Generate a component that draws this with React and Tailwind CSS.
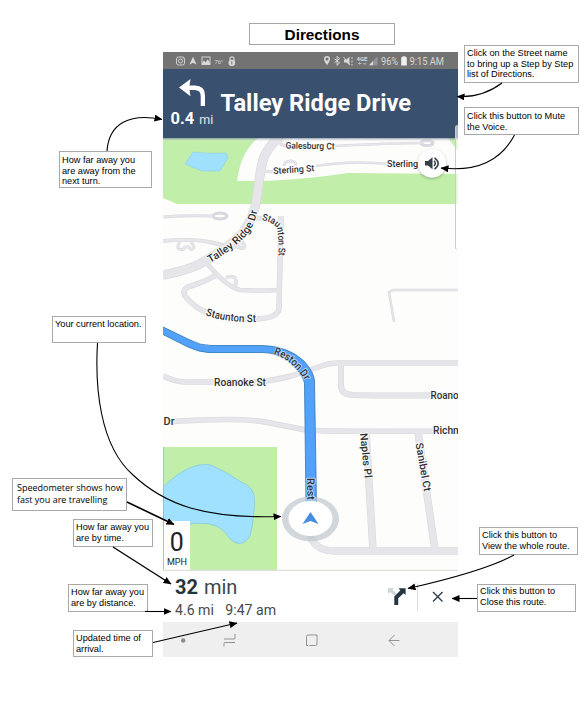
import React from "react";

function Note({ className, lines, font = "text-[9.2px]" }) {
  return (
    <div className={`border border-[#a9a9a9] bg-white text-black ${font} ${className}`}>
      {lines.map((line) => (
        <div key={line} className="whitespace-nowrap">{line}</div>
      ))}
    </div>
  );
}

function LeftNotes() {
  return (
    <div className="flex w-[163px] flex-col">
      <Note className="ml-[59px] mt-[151px] h-[37px] w-[93px] pl-[2px] pt-[3px] leading-[10.5px]" lines={["How far away you", "are away from the", "next turn."]} />
      <Note className="ml-[52px] mt-[128px] h-[27px] w-[94px] pl-[2px] pt-[2px] leading-[11px]" lines={["Your current location."]} />
      <Note className="ml-[12px] mt-[135px] h-[33px] w-[115px] pl-[4px] pt-[3px] font-['Open_Sans',sans-serif] leading-[12px]" font="text-[9px]" lines={["Speedometer shows how", "fast you are travelling"]} />
      <Note className="ml-[73px] mt-[8px] h-[28px] w-[80px] pl-[2px] pt-[2px] leading-[11px]" lines={["How far away you", "are by time."]} />
      <Note className="ml-[68px] mt-[37px] h-[28px] w-[80px] pl-[2px] pt-[2px] leading-[11px]" lines={["How far away you", "are by distance."]} />
      <Note className="ml-[73px] mt-[18px] h-[27px] w-[80px] pl-[2px] pt-[2px] leading-[10.5px]" lines={["Updated time of", "arrival."]} />
    </div>
  );
}

function RightNotes() {
  return (
    <div className="flex w-[129px] flex-col">
      <Note className="ml-[6px] mt-[45px] h-[38px] w-[115px] pl-[2px] pt-[2px] leading-[10.5px]" lines={["Click on the Street name", "to bring up a Step by Step", "list of Directions."]} />
      <Note className="ml-[6px] mt-[24px] h-[28px] w-[115px] pl-[2px] pt-[3px] leading-[10.5px]" lines={["Click this button to Mute", "the Voice."]} />
      <Note className="ml-[21px] mt-[392px] h-[28px] w-[99px] pl-[2px] pt-[2px] leading-[10.5px]" lines={["Click this button to", "View the whole route."]} />
      <Note className="ml-[19px] mt-[29px] h-[28px] w-[99px] pl-[2px] pt-[1px] leading-[11px]" lines={["Click this button to", "Close this route."]} />
    </div>
  );
}

function StatusBar() {
  return (
    <svg className="block h-[17px] w-[295px] bg-[#747373]" viewBox="163 52 295 17" fontFamily="Roboto, sans-serif" fill="#d8d8d8">
      <g fill="none" stroke="#d0d0d0">
        <rect x="176.5" y="57" width="8" height="8" rx="2" />
        <circle cx="180.5" cy="61" r="2" />
        <circle cx="183" cy="58.7" r=".2" />
        <rect x="202" y="57" width="8" height="7.5" />
        <path d="M230 61v-2.2a2 2 0 0 1 4 0V61" strokeWidth="1.3" />
      </g>
      <path d="M193 56.7l3.7 8-3.7-2-3.7 2z" />
      <path d="M202 63l2-2.5 1.7 1.7 2-3 2.3 3.5V65h-8z" />
      <text x="214.5" y="63.5" fontSize="6" textLength="8.5">76°</text>
      <rect x="228.5" y="59.8" width="6.6" height="6.2" rx="3" />
      <path d="M231.8 61.3v3" stroke="#747373" />
      <path d="M327 56.1a3 3 0 0 0-3 3c0 2.4 3 6.2 3 6.2s3-3.8 3-6.2a3 3 0 0 0-3-3z" />
      <circle cx="327" cy="59" r="1.5" fill="#747373" />
      <path d="M334.5 58.8l5 4-2.4 2.5v-9l2.4 2.5-5 4" fill="none" stroke="#d8d8d8" />
      <path d="M344 59.5h2.5l3-2.7v8.5l-3-2.8H344z" />
      <path d="M343.5 57l6.5 7.8M352 57v2m0 1.5v2m0 1.5v1.5" fill="none" stroke="#d8d8d8" />
      <text x="356.5" y="61.3" fontSize="6.2" fontWeight="700" textLength="11" lengthAdjust="spacingAndGlyphs">4GE</text>
      <path d="M358.5 63.5h3m-3 0l1.3-1m-1.3 1l1.3 1M363 63.8h3.5" stroke="#d8d8d8" strokeWidth=".7" fill="none" />
      <path d="M369 65.3l8.5-8.8v8.8z" fill="#969595" />
      <path d="M369 65.3l4-4.2v4.2z" />
      <text x="381" y="65" fontSize="10" textLength="17" lengthAdjust="spacingAndGlyphs">96%</text>
      <path d="M402.5 56.3h3v1h1.3v8.2h-5.6v-8.2h1.3z" fill="#f0f0f0" />
      <text x="409.5" y="65" fontSize="10" textLength="34.5" lengthAdjust="spacingAndGlyphs">9:15 AM</text>
    </svg>
  );
}

function Header() {
  return (
    <div className="flex h-[69px] bg-[#39516e] font-['Roboto',sans-serif] text-white">
      <div className="flex w-[57.5px] flex-col pl-[7.5px] pt-[9px]">
        <svg className="ml-[8px] block h-[30px] w-[28px]" viewBox="179 78 28 30">
          <path d="M179 87.5l11.5-8.5-1 6.5h5.5q10 0 10 10v10.5h-4.3V96q0-6-6-6h-5.2l1 6.2z" fill="#fff" />
        </svg>
        <div className="flex items-baseline gap-[5px] whitespace-nowrap leading-[22px]">
          <span className="text-[16.5px] font-bold">0.4</span>
          <span className="text-[12.5px] text-[#e1e6ec]">mi</span>
        </div>
      </div>
      <div className="flex items-center whitespace-nowrap pt-[1px] text-[23.7px] font-bold">Talley Ridge Drive</div>
    </div>
  );
}

const streets = [
  ["M281 136Q267 147 263 160Q260 172 257 196Q255 216 244 231Q235 243 208 259Q195 269 163 275", 9],
  ["M163 217Q185 215 212 216", 2.5],
  ["M163 241Q194 238 214 243L235 248", 3.5],
  ["M181 240q-5 7-2 9q4 2 6-2h4q2 4 5 1q0-3-5-9", 2.5],
  ["M235 246q3-5 7-4q5 5 0 6z", 3.5],
  ["M206 262Q225 286 240 290Q255 291 279 290", 4],
  ["M216 275Q207 281 188 287Q182 290 185 296Q196 309 206 312Q225 321 246 319Q277 320 279 309L281 216", 5],
  ["M226 278q5-3 9 0q3 6-2 9", 3],
  ["M250 219L258 218Q277 220 280 230", 4],
  ["M163 376Q178 383 190 382H245Q270 382 291 376L328 364Q334 363 341 363H460", 5],
  ["M341 363V386Q341 394 352 395Q390 396 460 395", 5.5],
  ["M163 422Q238 417 265 422L306 430Q320 432 460 431", 5],
  ["M366 431L373 550", 7],
  ["M418 432L435 550", 7],
  ["M310 535Q315 551 335 551H460", 7],
  ["M335 146Q390 143 424 143", 2],
  ["M316 166Q350 160 390 164", 2],
  ["M280 144L286 146M264 171L274 172", 2.5],
  ["M394 322L389 292L393 290H460", 2],
  ["M284 166q0-5 7-5q6 1 4 4", 2.5],
];

function Label({ x, y, w, size = 10, children, rotate = 0 }) {
  return (
    <text x={x} y={y} fontSize={size} textLength={w} lengthAdjust="spacingAndGlyphs" transform={`rotate(${rotate} ${x} ${y})`}>
      {children}
    </text>
  );
}

function StreetMap() {
  return (
    <svg className="block h-[433px] w-[295px]" viewBox="163 138 295 433">
      <defs>
        <path id="talley" d="M210 263Q238 247 250 231Q258 216 258 203" />
        <path id="staunton-short" d="M261.5 220Q272 222 276.5 227Q279 233 278.5 262" />
        <path id="staunton" d="M205.5 315Q225 323 262 322" />
        <path id="reston" d="M273.5 354Q291 359 304 379L309 388" />
        <linearGradient id="shade" x1="0" y1="0" x2="0" y2="1">
          <stop offset="0" stopColor="#68798b" stopOpacity=".7" />
          <stop offset="1" stopColor="#fff" stopOpacity="0" />
        </linearGradient>
        <filter id="soft" x="-30%" y="-30%" width="160%" height="160%">
          <feDropShadow dx="0" dy="1" stdDeviation="1.5" floodOpacity=".3" />
        </filter>
      </defs>
      <rect x="163" y="138" width="295" height="433" fill="#fdfdfc" />
      <path d="M163 138H258Q241 151 237 181H265Q309 179 348 173L458 174V204H177L163 198zM448 138H458V151z" fill="#c1eea8" />
      <path d="M193 152Q210 154 226 153L228 158L220 171H202L185 164z" fill="#9fe0fc" stroke="#91cfe8" strokeWidth=".6" />
      <rect x="163" y="447" width="114" height="124" fill="#c1eea8" />
      <path d="M163 487Q190 461 211 465Q229 473 241 482C256 488 255 498 254 511Q253 525 250 536C244 546 234 547 225 532Q212 519 184 525L163 532z" fill="#9fe1ff" stroke="#82c4dc" strokeWidth=".7" />
      <g fill="none" strokeLinejoin="round">
        {streets.map(([d, width]) => <path key={d} d={d} stroke="#d8d8de" strokeWidth={width + 0.5} />)}
        <g stroke="#d8d8de" strokeWidth="3">
          <ellipse cx="220" cy="216" rx="7" ry="3" />
          <ellipse cx="427" cy="143" rx="6" ry="2.5" />
        </g>
        {streets.map(([d, width]) => <path key={`${d}-fill`} d={d} stroke="#e6e5ea" strokeWidth={Math.max(0.5, width - 0.7)} />)}
      </g>
      <path
        d="M160 325.5L190 340Q200 345.5 211 345.5H262Q288 346 304 361Q314 372 314.5 381L316.5 505H306L304.5 383Q302 373 290 362Q278 352.5 262 352.5H208Q199 352 188 347L160 333z"
        fill="#52a1fa"
        stroke="#2f77b5"
        strokeWidth=".8"
      />
      <ellipse cx="310.5" cy="519" rx="28.5" ry="22.5" fill="#bfc8cf" fillOpacity=".72" />
      <ellipse cx="310.5" cy="518.5" rx="22" ry="17.5" fill="#fff" />
      <path d="M310.5 512L318.5 524L310.5 521L302.5 524z" fill="#478ddf" />
      <g fontFamily="Roboto, sans-serif" fontWeight="500" fill="#303030" stroke="#ffffff" strokeWidth="1.8" strokeLinejoin="round" paintOrder="stroke">
        <Label x={285.5} y={148.5} w={49} size={9} rotate={1}>Galesburg Ct</Label>
        <Label x={273.5} y={174} w={41} size={9} rotate={-4}>Sterling St</Label>
        <Label x={387} y={167} w={31} size={9}>Sterling</Label>
        <text fontSize="10.5"><textPath href="#talley" textLength="73" lengthAdjust="spacingAndGlyphs">Talley Ridge Dr</textPath></text>
        <text fontSize="9.5"><textPath href="#staunton-short" textLength="46" lengthAdjust="spacingAndGlyphs">Staunton St</textPath></text>
        <text fontSize="10.5"><textPath href="#staunton" textLength="51.5" lengthAdjust="spacingAndGlyphs">Staunton St</textPath></text>
        <g stroke="#b4d9ff"><text fontSize="10.5"><textPath href="#reston" textLength="42" lengthAdjust="spacingAndGlyphs">Reston Dr</textPath></text></g>
        <Label x={214} y={386} w={52} size={10.5}>Roanoke St</Label>
        <Label x={430.5} y={399} w={28} size={10}>Roano</Label>
        <Label x={163.5} y={425} w={11} size={10}>Dr</Label>
        <Label x={433} y={434} w={29} size={10.5}>Richm</Label>
        <Label x={360} y={433.5} w={45} size={10.5} rotate={84}>Naples Pl</Label>
        <Label x={415.5} y={443.5} w={49} size={10.5} rotate={80}>Sanibel Ct</Label>
        <g stroke="#b4d9ff"><Label x={307} y={478} w={22} size={10.5} rotate={89}>Rest</Label></g>
      </g>
      <circle cx="432" cy="163.5" r="14" fill="#fff" filter="url(#soft)" />
      <path d="M425 161h3l4.5-3.7v12l-4.5-3.8h-3z" fill="#333e46" />
      <path d="M434 160.8q2.6 2.6 0 5.2M434.5 157.9q7.4 5.6 0 11.2" fill="none" stroke="#333e46" strokeWidth="1.5" />
      <rect x="163" y="138" width="295" height="4" fill="url(#shade)" />
      <path d="M163.5 447V571" stroke="#8bc575" strokeWidth=".6" />
      <rect x="164" y="521" width="26" height="50" fill="#fff" />
      <g fontFamily="Roboto, sans-serif" fill="#202326" textAnchor="middle">
        <text x="176.7" y="550.5" fontSize="25" textLength="14" lengthAdjust="spacingAndGlyphs">0</text>
        <text x="177" y="564.8" fontSize="8.7" textLength="20" lengthAdjust="spacingAndGlyphs">MPH</text>
      </g>
      <path d="M163 570.5H458" stroke="#dededb" strokeWidth="1.5" />
    </svg>
  );
}

function TripBar() {
  return (
    <div className="flex h-[51px] bg-white font-['Roboto',sans-serif] text-[#46494d]">
      <div className="flex w-[220px] flex-col pl-[12px] pt-[4px]">
        <div className="flex items-baseline gap-[6px] text-[20px] leading-[24px]">
          <b className="text-[#27333b]">32</b><span className="text-[#3b454c]">min</span>
        </div>
        <div className="flex gap-[11.5px] whitespace-nowrap text-[14.1px] leading-[22px]"><span>4.6 mi</span><span>9:47 am</span></div>
      </div>
      <svg className="block h-[51px] w-[75px]" viewBox="383 571 75 51">
        <path d="M388 588h6l-1.5 2 4.5 4-2 2-5-4-2 2z" fill="#d2d5d7" />
        <path d="M394.3 605v-8.5l6-6-1.7-2.2h7v6.8l-2-1.8-5.4 5v6.7z" fill="#263641" />
        <path d="M417.5 583v28" stroke="#dddddd" />
        <path d="M433 592l9.5 9.5M442.5 592l-9.5 9.5" stroke="#303d46" strokeWidth="1.4" />
      </svg>
    </div>
  );
}

function NavigationBar() {
  return (
    <svg className="block h-[35px] w-[295px] bg-[#efefef]" viewBox="163 622 295 35" fill="none" stroke="#939393" strokeWidth="1">
      <circle cx="183.2" cy="640.5" r="2.2" fill="#8d8d8d" stroke="none" />
      <path d="M224 639h10q1 0 1-1v-4M224 646.5v-3q0-1 1-1h10" />
      <path d="M308 645.5h-1.5v-9q0-1.5 1.5-1.5h9v9q0 1.5-1.5 1.5h-6" />
      <path d="M399.5 640.5H389M394.5 635l-5.5 5.5 5.5 5.5" />
    </svg>
  );
}

function CalloutArrows() {
  return (
    <svg className="pointer-events-none absolute left-0 top-0 h-[721px] w-[587px]" viewBox="0 0 587 721">
      <defs>
        <marker id="arrow" markerUnits="userSpaceOnUse" markerWidth="8" markerHeight="7" refX="7.5" refY="3.5" orient="auto">
          <path d="M0 0L8 3.5L0 7z" fill="#000" />
        </marker>
      </defs>
      <g fill="none" stroke="#000" strokeWidth="1.1">
        <path d="M107 151C109 123 130 113 162 119.5" markerEnd="url(#arrow)" />
        <path d="M97.5 343C95 385 99 445 133 475C165 505 205 519 281 516.5" markerEnd="url(#arrow)" />
        <path d="M502 83Q482 98 457 96.5" markerEnd="url(#arrow)" />
        <path d="M514.5 135Q494 174 441 168" markerEnd="url(#arrow)" />
        <path d="M127 502L174 524.5" strokeWidth="1.6" markerEnd="url(#arrow)" />
        <path d="M113 547L171 584" strokeWidth="1.4" markerEnd="url(#arrow)" />
        <path d="M145 611.5H171" markerEnd="url(#arrow)" />
        <path d="M153 642.5L237 623" markerEnd="url(#arrow)" />
        <path d="M514 555Q485 571 408 588.5" markerEnd="url(#arrow)" />
        <path d="M477 598.5H452" markerEnd="url(#arrow)" />
      </g>
    </svg>
  );
}

export default function App() {
  return (
    <main className="relative flex h-[721px] w-[587px] overflow-hidden bg-white font-['Liberation_Sans',Arial,sans-serif]">
      <LeftNotes />
      <div className="flex w-[295px] flex-col">
        <h1 className="ml-[86px] mt-[23px] flex h-[22px] w-[146px] items-center justify-center border border-[#a5a5a5] pt-[3px] text-[15.3px] font-bold text-black">Directions</h1>
        <div className="relative mt-[7px] h-[605px]">
          <StatusBar />
          <Header />
          <StreetMap />
          <TripBar />
          <NavigationBar />
          <div className="absolute right-0 top-[73px] h-[125px] w-[3px] rounded-l-[3px] border-l border-[#c9cdd0] bg-white/60" />
        </div>
      </div>
      <RightNotes />
      <CalloutArrows />
    </main>
  );
}
